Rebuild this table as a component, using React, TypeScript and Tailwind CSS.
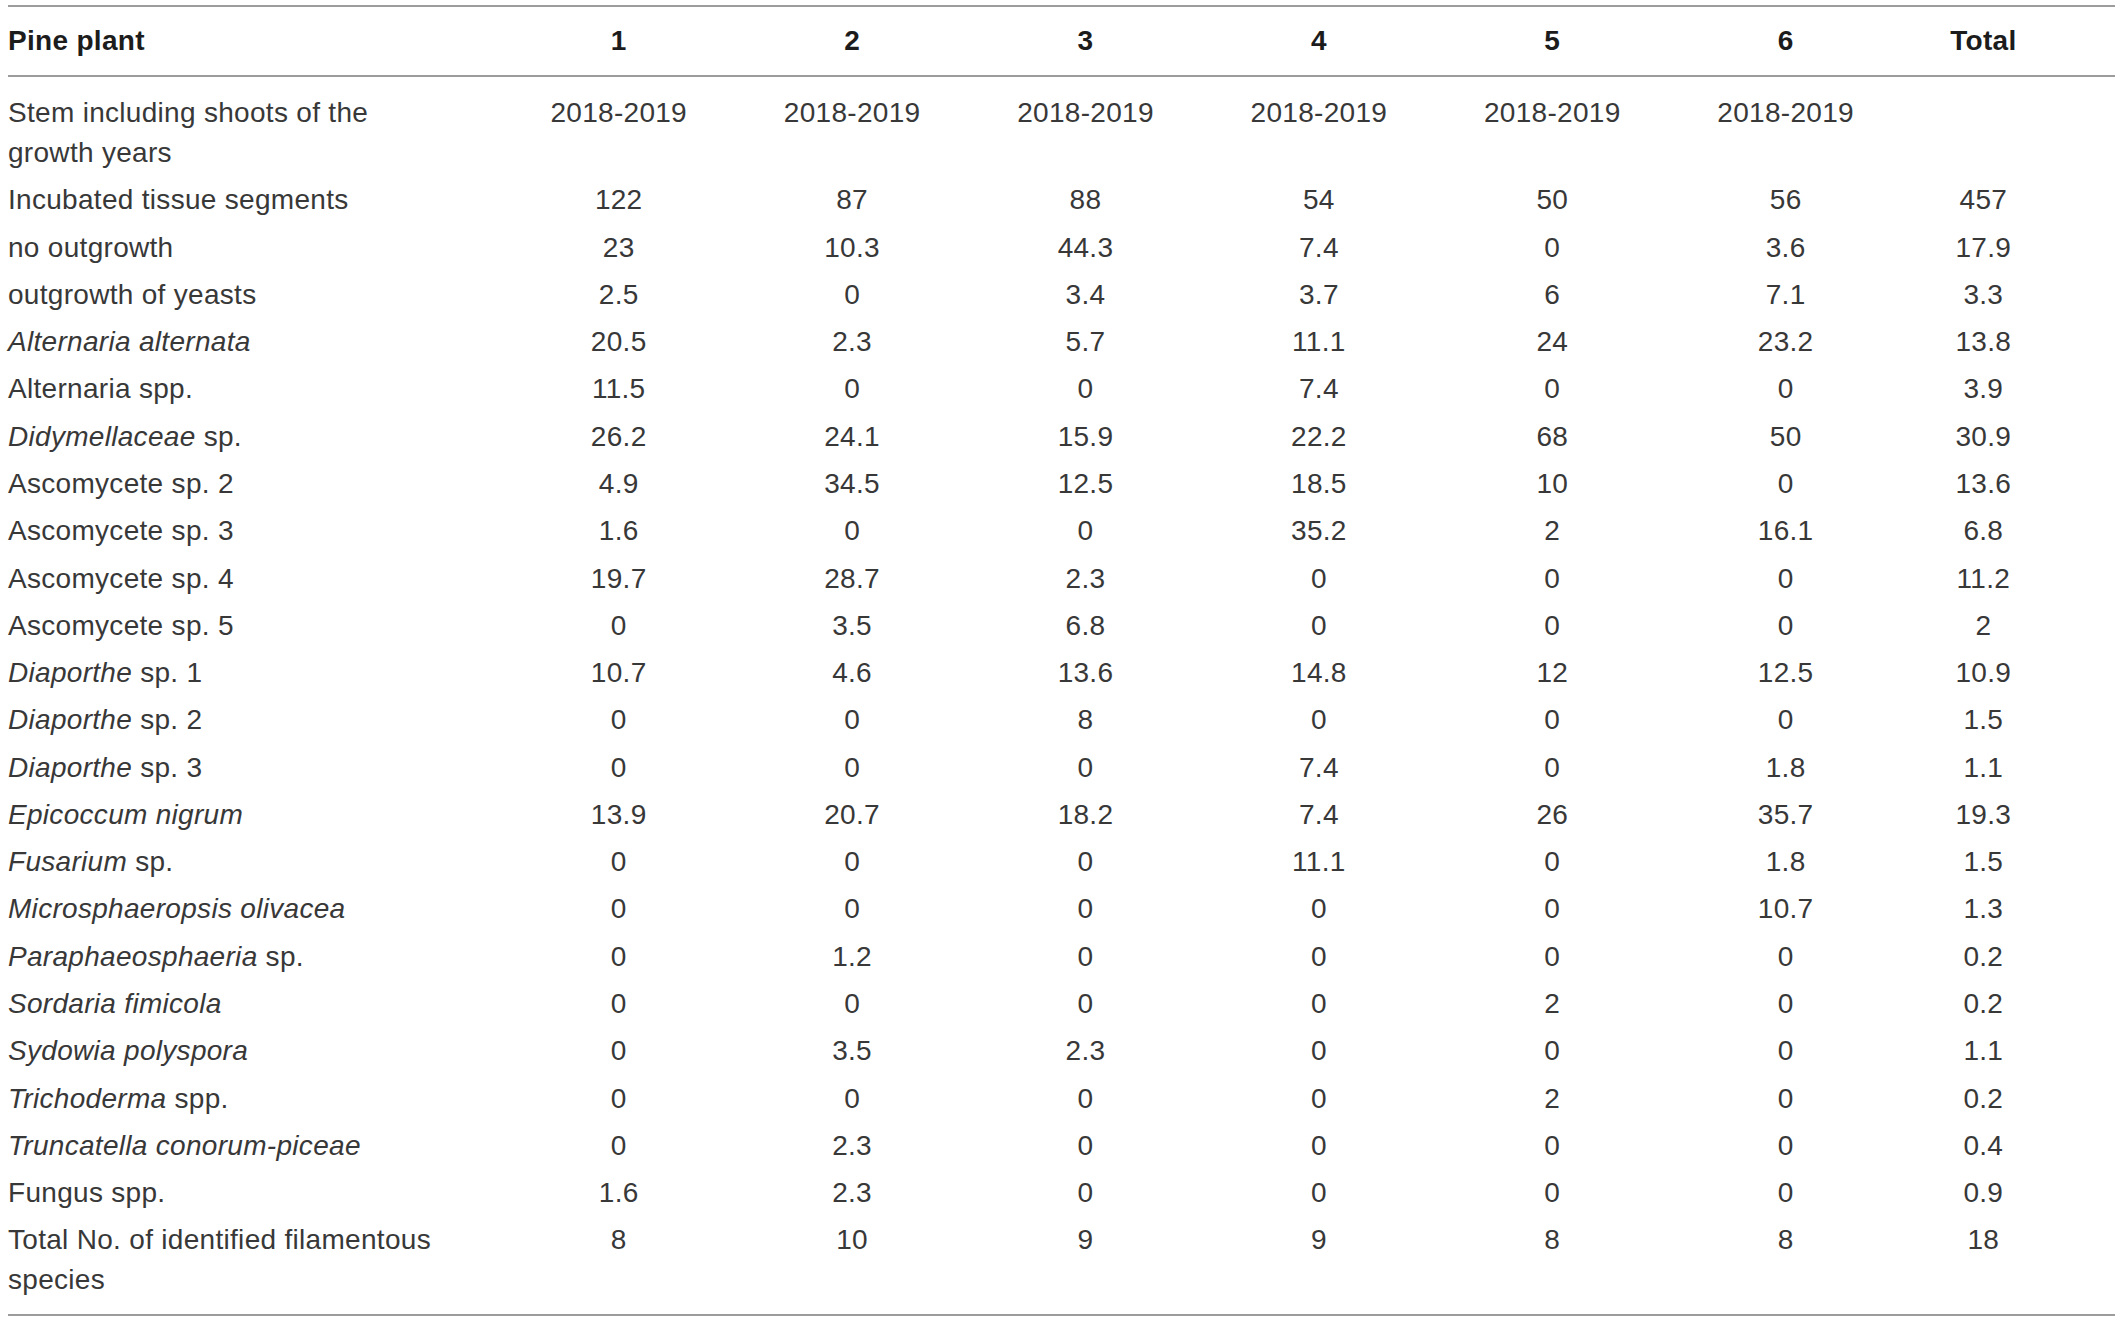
import React from 'react'

type Row = {
  label: React.ReactNode
  values: string[]
  total: string
}

const gridCols = 'grid grid-cols-[494px_repeat(6,233.4px)_162px_1fr]'

const rows: Row[] = [
  {
    label: (
      <>
        Stem including shoots of the
        <br />
        growth years
      </>
    ),
    values: ['2018-2019', '2018-2019', '2018-2019', '2018-2019', '2018-2019', '2018-2019'],
    total: '',
  },
  { label: 'Incubated tissue segments', values: ['122', '87', '88', '54', '50', '56'], total: '457' },
  { label: 'no outgrowth', values: ['23', '10.3', '44.3', '7.4', '0', '3.6'], total: '17.9' },
  { label: 'outgrowth of yeasts', values: ['2.5', '0', '3.4', '3.7', '6', '7.1'], total: '3.3' },
  { label: <i>Alternaria alternata</i>, values: ['20.5', '2.3', '5.7', '11.1', '24', '23.2'], total: '13.8' },
  { label: 'Alternaria spp.', values: ['11.5', '0', '0', '7.4', '0', '0'], total: '3.9' },
  {
    label: (
      <>
        <i>Didymellaceae</i> sp.
      </>
    ),
    values: ['26.2', '24.1', '15.9', '22.2', '68', '50'],
    total: '30.9',
  },
  { label: 'Ascomycete sp. 2', values: ['4.9', '34.5', '12.5', '18.5', '10', '0'], total: '13.6' },
  { label: 'Ascomycete sp. 3', values: ['1.6', '0', '0', '35.2', '2', '16.1'], total: '6.8' },
  { label: 'Ascomycete sp. 4', values: ['19.7', '28.7', '2.3', '0', '0', '0'], total: '11.2' },
  { label: 'Ascomycete sp. 5', values: ['0', '3.5', '6.8', '0', '0', '0'], total: '2' },
  {
    label: (
      <>
        <i>Diaporthe</i> sp. 1
      </>
    ),
    values: ['10.7', '4.6', '13.6', '14.8', '12', '12.5'],
    total: '10.9',
  },
  {
    label: (
      <>
        <i>Diaporthe</i> sp. 2
      </>
    ),
    values: ['0', '0', '8', '0', '0', '0'],
    total: '1.5',
  },
  {
    label: (
      <>
        <i>Diaporthe</i> sp. 3
      </>
    ),
    values: ['0', '0', '0', '7.4', '0', '1.8'],
    total: '1.1',
  },
  { label: <i>Epicoccum nigrum</i>, values: ['13.9', '20.7', '18.2', '7.4', '26', '35.7'], total: '19.3' },
  {
    label: (
      <>
        <i>Fusarium</i> sp.
      </>
    ),
    values: ['0', '0', '0', '11.1', '0', '1.8'],
    total: '1.5',
  },
  { label: <i>Microsphaeropsis olivacea</i>, values: ['0', '0', '0', '0', '0', '10.7'], total: '1.3' },
  {
    label: (
      <>
        <i>Paraphaeosphaeria</i> sp.
      </>
    ),
    values: ['0', '1.2', '0', '0', '0', '0'],
    total: '0.2',
  },
  { label: <i>Sordaria fimicola</i>, values: ['0', '0', '0', '0', '2', '0'], total: '0.2' },
  { label: <i>Sydowia polyspora</i>, values: ['0', '3.5', '2.3', '0', '0', '0'], total: '1.1' },
  {
    label: (
      <>
        <i>Trichoderma</i> spp.
      </>
    ),
    values: ['0', '0', '0', '0', '2', '0'],
    total: '0.2',
  },
  { label: <i>Truncatella conorum-piceae</i>, values: ['0', '2.3', '0', '0', '0', '0'], total: '0.4' },
  { label: 'Fungus spp.', values: ['1.6', '2.3', '0', '0', '0', '0'], total: '0.9' },
  {
    label: (
      <>
        Total No. of identified filamentous
        <br />
        species
      </>
    ),
    values: ['8', '10', '9', '9', '8', '8'],
    total: '18',
  },
]

export default function App() {
  return (
    <div className="min-h-screen bg-white pl-[8px] pr-[5px] pt-[5px] font-['Liberation_Sans',Arial,sans-serif] text-[28px] leading-[40px] tracking-[0.3px] text-[#383838]">
      <div className="border-t-2 border-b-2 border-[#9c9c9c] pb-[10px]">
        {/* Header */}
        <div className={`${gridCols} border-b-2 border-[#9c9c9c] pt-[14px] pb-[14px] font-bold text-[#1c1c1c]`}>
          <div>Pine plant</div>
          {['1', '2', '3', '4', '5', '6'].map((n) => (
            <div key={n} className="text-center">
              {n}
            </div>
          ))}
          <div className="text-center">Total</div>
          <div />
        </div>

        {/* Body */}
        <div className="pt-[12.35px]">
          {rows.map((row, i) => (
            <div key={i} className={`${gridCols} items-start py-[3.65px]`}>
              <div>{row.label}</div>
              {row.values.map((v, j) => (
                <div key={j} className="text-center">
                  {v}
                </div>
              ))}
              <div className="text-center">{row.total}</div>
              <div />
            </div>
          ))}
        </div>
      </div>
    </div>
  )
}
